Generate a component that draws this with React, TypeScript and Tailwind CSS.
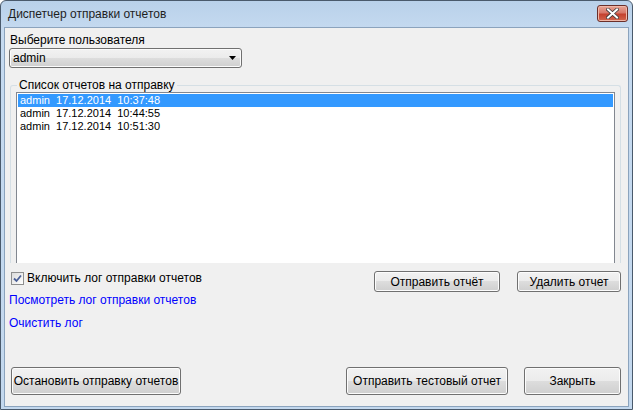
import React from 'react'

const reports = [
  { user: 'admin', date: '17.12.2014', time: '10:37:48' },
  { user: 'admin', date: '17.12.2014', time: '10:44:55' },
  { user: 'admin', date: '17.12.2014', time: '10:51:30' },
]

function WinButton({ label, className }: { label: string; className: string }) {
  return (
    <button
      className={
        'flex items-center justify-center rounded-[3px] border border-[#707070] bg-[linear-gradient(#f2f2f2_0%,#ebebeb_50%,#dddddd_50%,#cfcfcf_100%)] text-[12px] text-black shadow-[inset_0_0_0_1px_#fcfcfc] ' +
        className
      }
    >
      {label}
    </button>
  )
}

export default function App() {
  const selected = 0

  return (
    <div className="flex h-[410px] w-[633px] flex-col overflow-hidden rounded-t-[6px] border border-[#4a5a6c] bg-[linear-gradient(#b9d1ea,#c5daf0_30px,#c3d8ee)] font-['Liberation_Sans',sans-serif] text-[12px] text-black">
      {/* title bar */}
      <div className="flex h-[26px] shrink-0 items-start justify-between">
        <span className="pl-[7px] pt-[5px] text-[12px] leading-[16px] text-[#1e1e1e]">Диспетчер отправки отчетов</span>
        <div className="mr-[4px] mt-[4px] flex h-[17px] w-[31px] items-center justify-center rounded-[3px] border border-[#6b2f2a] bg-[linear-gradient(#e8a493,#d7786a_45%,#c4412e_55%,#d2664e)] shadow-[inset_0_0_0_1px_#efb7a8]">
          <svg width="13" height="11" viewBox="0 0 13 11">
            <path d="M2 1.5 L11 9.5 M11 1.5 L2 9.5" stroke="#3b3b3b" strokeWidth="3.6" strokeLinecap="square" />
            <path d="M2 1.5 L11 9.5 M11 1.5 L2 9.5" stroke="#ffffff" strokeWidth="2" strokeLinecap="square" />
          </svg>
        </div>
      </div>

      {/* client area */}
      <div className="mx-[3px] mb-[2px] flex flex-1 flex-col border border-[#8ba3bd] bg-[#f0f0f0] px-[4px]">
        <div className="pl-[1px] pt-[5px] leading-[14px]">Выберите пользователя</div>

        <div className="mt-[1px] flex h-[20px] w-[233px] items-center justify-between rounded-[3px] border border-[#707070] bg-[linear-gradient(#f2f2f2_0%,#ebebeb_50%,#dddddd_50%,#cfcfcf_100%)] pl-[3px] pr-[5px] shadow-[inset_0_0_0_1px_#fbfbfb]">
          <span>admin</span>
          <svg width="7" height="4" viewBox="0 0 7 4">
            <path d="M0 0 H7 L3.5 4 Z" fill="#000" />
          </svg>
        </div>

        {/* group box */}
        <div className="relative ml-[1px] mr-[3px] mt-[17px] h-[178px] rounded-t-[3px] border border-b-0 border-[#d5dfe5] px-[5px] pt-[6px]">
          <span className="absolute left-[6px] top-[-8px] bg-[#f0f0f0] px-[2px] leading-[14px]">Список отчетов на отправку</span>
          <div className="h-full border border-b-0 border-[#828790] bg-white p-[1px] text-[11px]">
            {reports.map((r, i) => (
              <div
                key={i}
                className={
                  'flex h-[13px] items-center whitespace-pre pl-[2px] leading-[13px] ' +
                  (i === selected ? 'bg-[#3399ff] text-white' : 'text-black')
                }
              >
                {r.user + '  ' + r.date + '  ' + r.time}
              </div>
            ))}
          </div>
        </div>

        {/* options + actions */}
        <div className="mt-[8px] flex items-start justify-between pr-[3px]">
          <div className="flex flex-col">
            <label className="flex h-[13px] items-center gap-[3px] pl-[2px] pt-[1px]">
              <span className="flex h-[13px] w-[13px] items-center justify-center border border-[#8e8f8f] bg-[linear-gradient(135deg,#dcdcdc,#ffffff)]">
                <svg width="9" height="9" viewBox="0 0 9 9">
                  <path d="M1 4.5 L3.5 7 L8 1.5" stroke="#4a5f97" strokeWidth="1.8" fill="none" />
                </svg>
              </span>
              <span className="leading-[14px]">Включить лог отправки отчетов</span>
            </label>
            <a className="mt-[9px] cursor-pointer leading-[14px] text-[#0000ff]">Посмотреть лог отправки отчетов</a>
            <a className="mt-[9px] cursor-pointer leading-[14px] text-[#0000ff]">Очистить лог</a>
          </div>
          <div className="flex gap-[17px]">
            <WinButton label="Отправить отчёт" className="h-[21px] w-[126px]" />
            <WinButton label="Удалить отчет" className="h-[21px] w-[104px]" />
          </div>
        </div>

        <div className="flex-1" />

        {/* bottom buttons */}
        <div className="mb-[11px] flex items-center pl-[2px] pr-[3px]">
          <WinButton label="Остановить отправку отчетов" className="h-[28px] w-[170px]" />
          <div className="flex-1" />
          <WinButton label="Отправить тестовый отчет" className="h-[28px] w-[162px]" />
          <WinButton label="Закрыть" className="ml-[16px] h-[28px] w-[97px]" />
        </div>
      </div>
    </div>
  )
}
